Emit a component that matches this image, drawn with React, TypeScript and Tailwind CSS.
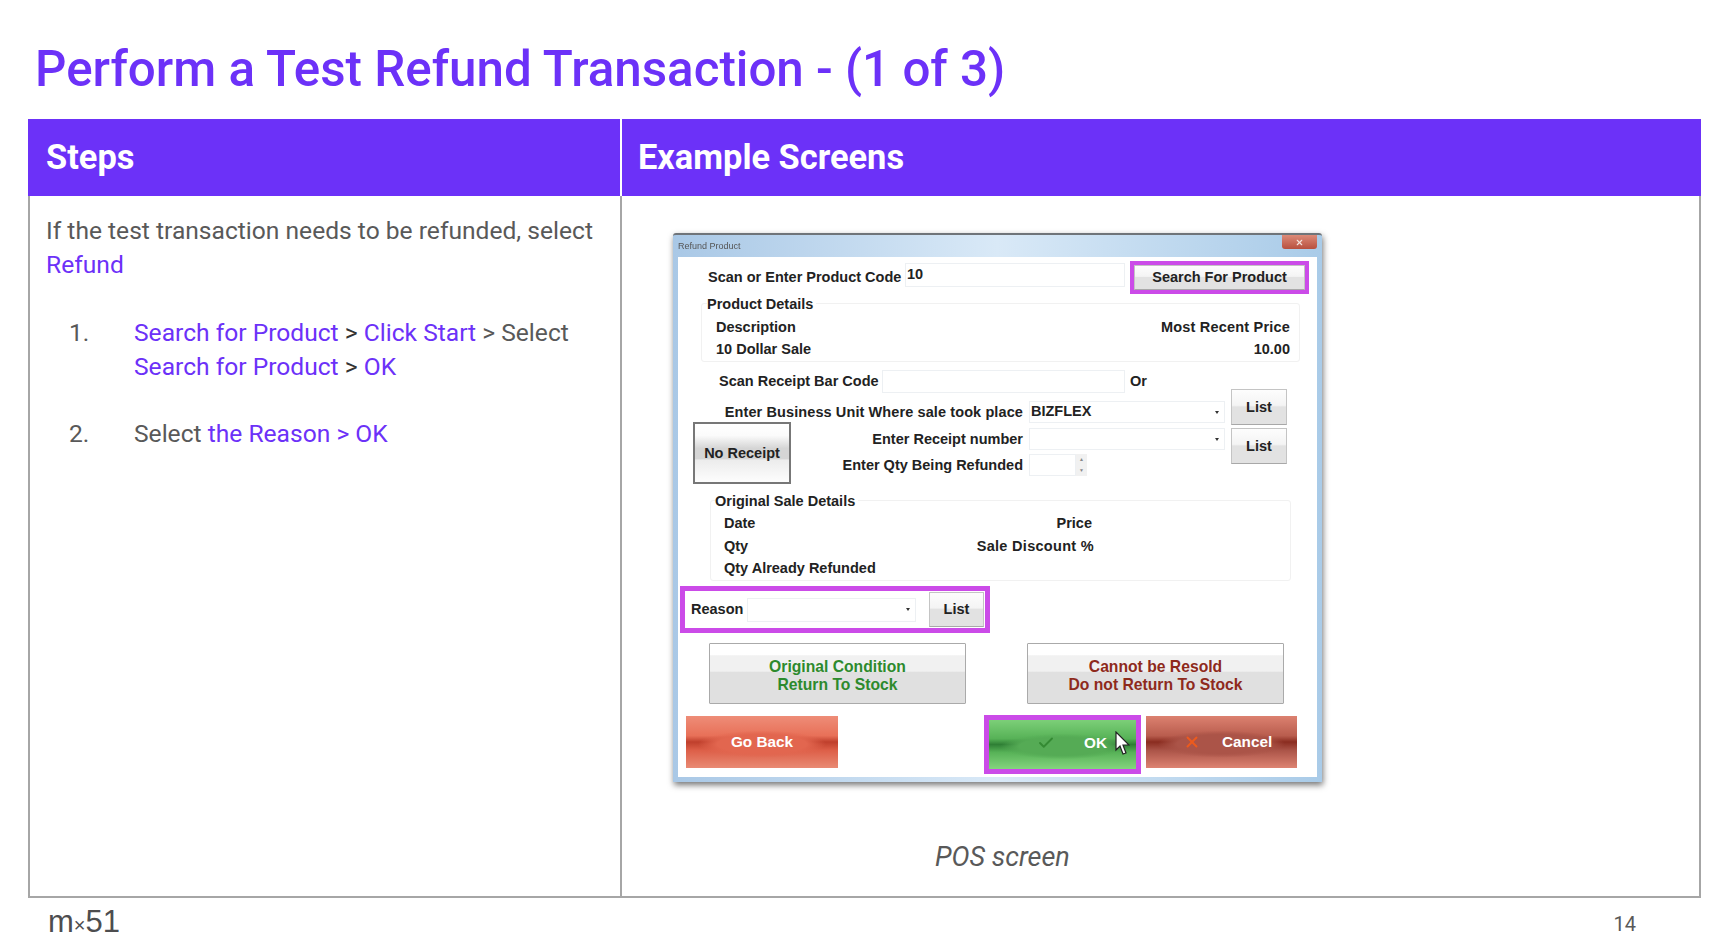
import type { ReactNode } from 'react';
import { Check, X } from 'lucide-react';

const Link = ({ children }: { children: string }) => <span className="text-[#6c31f8]">{children}</span>;

const GrayBtn = ({ children, className }: { children: string; className: string }) => (
  <div
    className={`flex items-center justify-center border border-[#c4c4c4] border-b-[#a8a8a8] bg-[linear-gradient(180deg,#fdfdfd_0%,#f4f4f4_45%,#e2e2e2_50%,#e2e2e2_100%)] ${className}`}
  >
    {children}
  </div>
);

const Field = ({ value, arrow, className }: { value?: string; arrow?: boolean; className: string }) => (
  <div className={`flex items-center justify-between border border-[#edf0f3] bg-white pl-[1px] pr-[5px] ${className}`}>
    <span>{value}</span>
    {arrow && <span className="h-0 w-0 border-x-[2.5px] border-t-[3px] border-x-transparent border-t-[#333]" />}
  </div>
);

const SideButton = ({ children, className, gradient }: { children: ReactNode; className: string; gradient: string }) => (
  <div className={`mt-[1px] flex h-[52px] items-center text-[15.3px] text-white ${gradient} ${className}`}>{children}</div>
);

const PosWindow = () => (
  <div className="ml-[51px] mt-[37px] flex h-[549px] w-[649px] flex-col rounded-t-[3px] border-t-2 border-[#6f7479] bg-[linear-gradient(90deg,#a9c8e6_0%,#d9e9f7_50%,#a9cbe8_100%)] px-[5px] pb-[5px] font-['Liberation_Sans',sans-serif] text-[14.5px] font-bold text-[#222] shadow-[1px_3px_6px_rgba(0,0,0,0.55)] blur-[0.4px]">
    <div className="flex h-[22px] shrink-0 items-start justify-between">
      <span className="pt-[4px] text-[9px] font-normal leading-[14px] text-[#555]">Refund Product</span>
      <div className="flex h-[14px] w-[35px] items-center justify-center rounded-b-[3px] bg-[linear-gradient(180deg,#dc8a78,#b8503f)]">
        <X size={9} color="#f5e3de" strokeWidth={3} />
      </div>
    </div>

    <div className="flex-1 bg-white">
      <div className="mt-[4px] flex h-[33px]">
        <div className="flex w-[227px] items-center whitespace-nowrap pl-[30px]">Scan or Enter Product Code</div>
        <Field value="10" className="mt-[2px] h-[24px] w-[220px]" />
        <div className="ml-[5px] h-[33px] w-[179px] border-[4px] border-[#cb4be8] bg-white">
          <GrayBtn className="h-full w-full">Search For Product</GrayBtn>
        </div>
      </div>

      <div className="relative ml-[23px] mt-[9px] h-[59px] w-[599px] rounded-[3px] border border-[#f1f1f1] pl-[14px] pr-[9px] pt-[12px] leading-[22px]">
        <span className="absolute -top-[11px] left-[5px] bg-white pr-[3px]">Product Details</span>
        <div className="flex justify-between">
          <span>Description</span>
          <span className="tracking-[0.2px]">Most Recent Price</span>
        </div>
        <div className="flex justify-between">
          <span>10 Dollar Sale</span>
          <span>10.00</span>
        </div>
      </div>

      <div className="mt-[8px] flex h-[23px] items-center">
        <span className="ml-[41px] w-[163px] whitespace-nowrap">Scan Receipt Bar Code</span>
        <Field className="h-[23px] w-[243px]" />
        <span className="ml-[5px]">Or</span>
      </div>

      <div className="-mt-[4px] flex h-[95px]">
        <div className="grid w-[351px] shrink-0">
          <div className="col-start-1 row-start-1 ml-[15px] mt-[33px] h-[62px] w-[98px] border-2 border-[#777]">
            <div className="flex h-full items-center justify-center bg-[linear-gradient(180deg,#ffffff_0%,#fbfbfb_20%,#d5d5d5_42%,#d5d5d5_60%,#ececec_62%,#fdfdfd_100%)] pt-[2px]">
              No Receipt
            </div>
          </div>
          <div className="col-start-1 row-start-1 whitespace-nowrap pr-[6px] pt-[12px] text-right leading-[22px]">
            <div className="tracking-[0.1px]">Enter Business Unit Where sale took place</div>
            <div className="mt-[5px]">Enter Receipt number</div>
            <div className="mt-[4px]">Enter Qty Being Refunded</div>
          </div>
        </div>
        <div className="w-[196px] shrink-0 pt-[12px]">
          <Field value="BIZFLEX" arrow className="h-[22px] w-[196px]" />
          <Field arrow className="mt-[5px] h-[22px] w-[196px]" />
          <div className="mt-[4px] flex">
            <Field className="h-[22px] w-[47px]" />
            <div className="flex h-[22px] w-[11px] flex-col bg-[#f1f1f1] text-center text-[5px] font-normal leading-[11px] text-[#888]">
              <span>▲</span>
              <span>▼</span>
            </div>
          </div>
        </div>
        <div className="ml-[6px] w-[56px]">
          <GrayBtn className="h-[36px] w-[56px] pt-[2px]">List</GrayBtn>
          <GrayBtn className="mt-[3px] h-[36px] w-[56px] pt-[2px]">List</GrayBtn>
        </div>
      </div>

      <div className="relative ml-[32px] mt-[16px] h-[81px] w-[581px] rounded-[3px] border border-[#f1f1f1] pl-[13px] pt-[11px] leading-[22.5px]">
        <span className="absolute -top-[11px] left-[4px] bg-white pr-[3px]">Original Sale Details</span>
        <div className="flex w-[368px] justify-between">
          <span>Date</span>
          <span>Price</span>
        </div>
        <div className="flex w-[370px] justify-between">
          <span>Qty</span>
          <span className="tracking-[0.3px]">Sale Discount %</span>
        </div>
        <div>Qty Already Refunded</div>
      </div>

      <div className="ml-[2px] mt-[5px] flex h-[47px] w-[310px] items-center border-[5px] border-[#cb4be8] pl-[6px]">
        <span className="w-[56px]">Reason</span>
        <Field arrow className="h-[24px] w-[169px]" />
        <GrayBtn className="ml-[13px] h-[35px] w-[55px]">List</GrayBtn>
      </div>

      <div className="ml-[31px] mt-[10px] flex gap-[61px] text-center text-[15.7px] leading-[18px]">
        <div className="flex h-[61px] w-[257px] flex-col justify-center rounded-[1px] border border-[#aaa] bg-[linear-gradient(180deg,#ffffff_0%,#ffffff_18%,#f1f1f1_20%,#f1f1f1_46%,#e0e0e0_48%,#e0e0e0_100%)] pt-[4px] text-[#2d8a2d]">
          <span>Original Condition</span>
          <span>Return To Stock</span>
        </div>
        <div className="flex h-[61px] w-[257px] flex-col justify-center rounded-[1px] border border-[#aaa] bg-[linear-gradient(180deg,#ffffff_0%,#ffffff_18%,#f1f1f1_20%,#f1f1f1_46%,#e0e0e0_48%,#e0e0e0_100%)] pt-[4px] text-[#8e2a1c]">
          <span>Cannot be Resold</span>
          <span>Do not Return To Stock</span>
        </div>
      </div>

      <div className="mt-[11px] flex items-start">
        <SideButton
          className="ml-[8px] w-[152px] justify-center"
          gradient="bg-[radial-gradient(ellipse_42%_26%_at_50%_54%,#e2664f_70%,transparent_100%),linear-gradient(180deg,#ee8d78_0%,#e87058_38%,#bf3f2c_50%,#dd5f48_66%,#e98a74_100%)]"
        >
          Go Back
        </SideButton>
        <div className="relative ml-[146px] h-[59px] w-[157px] border-[5px] border-[#cb4be8]">
          <div className="relative flex h-full items-center bg-[radial-gradient(ellipse_42%_26%_at_50%_54%,#55ab55_70%,transparent_100%),linear-gradient(180deg,#7ccf78_0%,#57b257_38%,#2f7f35_50%,#57b257_66%,#84d47e_100%)] pb-[3px] pl-[48px] text-[15.3px] text-white">
            <Check size={18} color="#348a33" strokeWidth={2.5} />
            <span className="ml-[29px]">OK</span>
          </div>
          <svg className="absolute right-[6px] top-[11px]" width="15" height="24" viewBox="0 0 15 24">
            <path d="M1 1v18l4-4 3 8 3-1-3-8h6z" fill="#fff" stroke="#222" strokeWidth="1.2" />
          </svg>
        </div>
        <SideButton
          className="ml-[5px] w-[151px]"
          gradient="bg-[radial-gradient(ellipse_42%_26%_at_50%_54%,#ab5448_70%,transparent_100%),linear-gradient(180deg,#dc8170_0%,#b95d4e_38%,#8a2c20_50%,#ab5448_66%,#dd8372_100%)]"
        >
          <X size={18} color="#ec5a1e" strokeWidth={2.5} className="ml-[37px]" />
          <span className="ml-[21px]">Cancel</span>
        </SideButton>
      </div>
    </div>
  </div>
);

export default function App() {
  return (
    <div className="h-[944px] w-[1718px] overflow-hidden bg-white font-['Roboto',sans-serif] text-[#595959]">
      <h1 className="flex h-[119px] items-start pl-[35px] pt-[38px] text-[49.3px] font-medium leading-[62px] text-[#6c31f8]">
        Perform a Test Refund Transaction - (1 of 3)
      </h1>

      <div className="ml-[28px] w-[1673px]">
        <div className="flex h-[77px] items-center bg-[#6c31f8] text-[34.4px] font-bold text-white">
          <div className="flex h-[77px] w-[594px] items-center border-r-2 border-white pl-[18px]">Steps</div>
          <div className="pl-[16px]">Example Screens</div>
        </div>

        <div className="flex h-[702px] border-x-2 border-b-2 border-[#a6a6a6]">
          <div className="w-[592px] shrink-0 border-r-2 border-[#a6a6a6] pl-[16px] pt-[18px] text-[24.6px] leading-[33.6px]">
            <p>
              If the test transaction needs to be refunded, select <Link>Refund</Link>
            </p>
            <ol className="mt-[35px]">
              <li className="flex">
                <span className="w-[88px] shrink-0 pl-[23px]">1.</span>
                <span>
                  <Link>Search for Product</Link> <span className="text-[#333]">&gt;</span> <Link>Click Start</Link> &gt; Select{' '}
                  <Link>Search for Product</Link> <span className="text-[#333]">&gt;</span> <Link>OK</Link>
                </span>
              </li>
              <li className="mt-[34px] flex">
                <span className="w-[88px] shrink-0 pl-[23px]">2.</span>
                <span>
                  Select <Link>the Reason &gt; OK</Link>
                </span>
              </li>
            </ol>
          </div>

          <div className="flex-1">
            <PosWindow />
            <p className="ml-[313px] mt-[59px] whitespace-nowrap text-[27px] italic leading-[33px]">POS screen</p>
          </div>
        </div>
      </div>

      <div className="flex items-start justify-between pl-[48px] pr-[82px]">
        <div className="mt-[6px] flex items-baseline font-['Liberation_Sans',sans-serif] text-[31px] leading-[36px] text-[#4d4d4f]">
          <span>m</span>
          <span className="text-[20px] leading-[20px]">×</span>
          <span>51</span>
        </div>
        <span className="mt-[14px] text-[20px] leading-[24px]">14</span>
      </div>
    </div>
  );
}
